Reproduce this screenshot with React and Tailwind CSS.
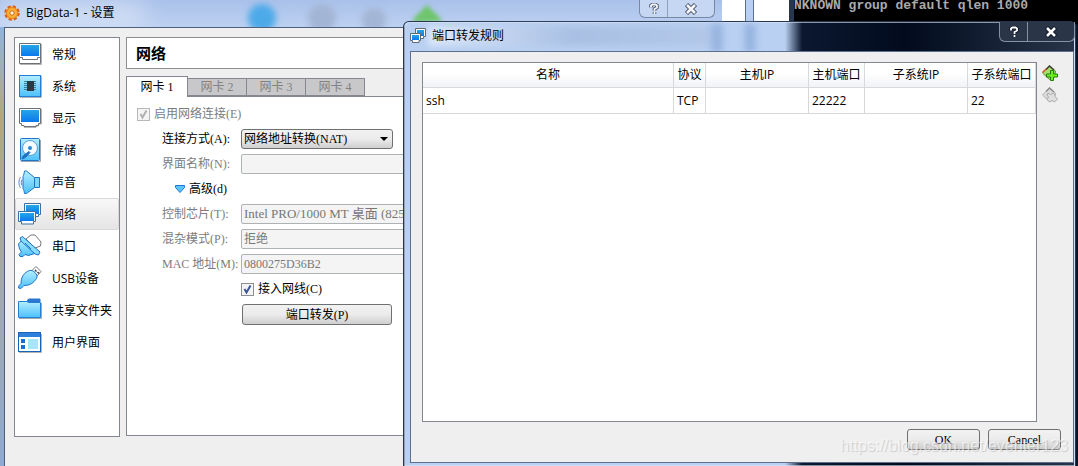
import React, { useState } from 'react';

const icons = {
  general: (
    <>
      <path d="M2 22.500h21.500V2" fill="none" stroke="#b5b5b5" />
      <path d="M1.500 1.500h21v20h-21z" fill="#fff" stroke="#6d7278" />
      <rect x="3" y="3" width="18" height="11" fill="url(#screenBlue)" />
      <path d="M1.500 15.500h3v2h15v-2h3" fill="none" stroke="#6d7278" />
    </>
  ),
  system: (
    <>
      <path d="M2 23.500h21.500V2" fill="none" stroke="#b5b5b5" />
      <rect x="1.500" y="1.500" width="21" height="21" fill="url(#lightBlue)" stroke="#1f7fd6" />
      <path d="M6 7.500h12M6 9.500h12M6 11.500h12M6 13.500h12M6 15.500h12" stroke="#3a7ea8" />
      <rect x="9" y="7" width="7" height="10" fill="#2f3742" />
    </>
  ),
  display: (
    <>
      <path d="M6 21.500h12v-1.500h2.500v-2h3V3" fill="none" stroke="#b5b5b5" />
      <path d="M1.500 2.500h21v15h-2v2h-2.500v1H6v-1H3.500v-2h-2z" fill="#fff" stroke="#6d7278" />
      <rect x="3" y="4" width="18" height="12" fill="url(#screenBlue)" />
    </>
  ),
  storage: (
    <>
      <path d="M3 23.500h19.500V2" fill="none" stroke="#9aa6b2" />
      <rect x="2.500" y="0.500" width="19" height="22" rx="1" fill="url(#lightBlue)" stroke="#1f74c8" />
      <circle cx="12" cy="10" r="7.500" fill="#f4fbff" stroke="#5a9fd4" />
      <circle cx="12" cy="10" r="2" fill="#2a86d8" />
      <path d="M4 20l1.500-2.500L11 13.500l1 1-4 4.500-3.500 2z" fill="#2470c0" stroke="#2470c0" />
    </>
  ),
  audio: (
    <>
      <path d="M16.500 7.500h5v10h-5z" fill="#7ad6ff" stroke="#1f74c8" />
      <path d="M6.500 1h2l8 6.500v10l-8 6h-2c-0.500-3-0.500-3-1.500-5v-12c1-2 1-2.500 1.500-5.500z" fill="url(#lightBlue)" stroke="#1f74c8" />
      <path d="M2.500 7c-2 3-2 8 0 11M4 9.500c-1 2-1 4 0 6" fill="none" stroke="#4a90cc" />
    </>
  ),
  network: (
    <>
      <path d="M6.500 1.500h16v11h-2v2h-14z" fill="#f4fbff" stroke="#3f6f9c" />
      <rect x="8" y="3" width="13" height="9" fill="url(#screenBlue)" />
      <path d="M0.500 9.500h17v10h-2v2.500h-12v-2.500h-3z" fill="#f4fbff" stroke="#3f6f9c" />
      <rect x="2" y="11" width="14" height="8" fill="url(#screenBlue)" />
    </>
  ),
  serial: (
    <>
      <path d="M8 5l5-4h4l6 7-0.500 4L17 14z" fill="#fff" stroke="#777" />
      <path d="M4 6L0.500 10l1 5 2 3L1 20.500l1 2h3l2-2 3.500 1L15 20l3-1z" fill="url(#lightBlue)" stroke="#1f74c8" strokeLinejoin="round" />
      <path d="M2 4l2.500-1.500L22 18l-1.500 3L17 20 3 7z" fill="#85dcff" stroke="#1f74c8" strokeLinejoin="round" />
      <path d="M7 9l6 6" stroke="#1f74c8" />
    </>
  ),
  usb: (
    <>
      <path d="M12.500 6l5.500-5.500 5 5L18 11z" fill="#fff" stroke="#777" />
      <path d="M17 4l1.500 1.500M19.500 6l1.500 1.500" stroke="#444" strokeWidth="1.500" />
      <path d="M11.500 4.500c2-0.500 4 0.500 5.500 2 2 2 2.500 4 1.500 6C15.500 17 12 19.500 6 19.500L3 22.500 0.500 22 1 19.500l2-2C3 11 6 6.500 11.500 4.500z" fill="url(#lightBlue)" stroke="#1f74c8" />
    </>
  ),
  folder: (
    <>
      <path d="M8.500 4l2-3H22v3z" fill="#2d77d0" stroke="#2d77d0" />
      <path d="M1 20.500h22.500V5" fill="none" stroke="#a3a9b0" />
      <path d="M0.500 3.500H9l1.500 1H22.500v15h-22z" fill="url(#lightBlue)" stroke="#1f80d4" />
    </>
  ),
  ui: (
    <>
      <path d="M1 22.500h22.500V4" fill="none" stroke="#b5b5b5" />
      <rect x="0.500" y="2.500" width="22" height="19" fill="#fff" stroke="#1c62b8" />
      <path d="M1 3h21v4H1z" fill="#2f80dc" />
      <path d="M3 9h4v4H3zM3 15h4v4H3z" fill="#1c6fd0" />
      <path d="M10 9h10v10H10z" fill="#a8e4fb" />
    </>
  ),
};

const sections = [
  { id: 'general', name: '常规' },
  { id: 'system', name: '系统' },
  { id: 'display', name: '显示' },
  { id: 'storage', name: '存储' },
  { id: 'audio', name: '声音' },
  { id: 'network', name: '网络' },
  { id: 'serial', name: '串口' },
  { id: 'usb', name: 'USB设备' },
  { id: 'folder', name: '共享文件夹' },
  { id: 'ui', name: '用户界面' },
];

const columns = [
  { name: '名称', width: '' },
  { name: '协议', width: 'w-8' },
  { name: '主机IP', width: 'w-[103px]' },
  { name: '主机端口', width: 'w-[56px]' },
  { name: '子系统IP', width: 'w-[103px]' },
  { name: '子系统端口', width: 'w-[68px]' },
];

const rules = [['ssh', 'TCP', '', '22222', '', '22']];

const fieldStyle = 'h-5 min-w-0 flex-1 appearance-none rounded-xs border border-[#adb2b5] bg-[#f4f4f4] px-0.5 text-[#777]';
const buttonStyle = 'rounded-[3px] border border-[#707070] bg-linear-to-b from-[#f2f2f2] via-[#ebebeb] via-50% to-[#cfcfcf] text-center text-black';

const Checkbox = ({ id, checked, disabled, onChange }) => (
  <span className="relative flex">
    <input
      id={id}
      type="checkbox"
      checked={checked}
      disabled={disabled}
      onChange={onChange}
      className="size-[13px] appearance-none border border-[#8e8f8f] bg-[#f4f4f4] disabled:border-[#b8b8b8]"
    />
    {checked && (
      <svg viewBox="0 0 13 13" className="pointer-events-none absolute inset-0 size-[13px]">
        <path d="M3.500 6l2 3.500 4-7" fill="none" strokeWidth="2" stroke={disabled ? '#b0b0b0' : '#3c5598'} />
      </svg>
    )}
  </span>
);

const Row = ({ id, label, disabled, children }) => (
  <div className="flex h-5 items-center pl-[35px]">
    <label htmlFor={id} className={`w-[79px] shrink-0 whitespace-nowrap ${disabled ? 'text-[#7c7c7c]' : ''}`}>{label}</label>
    {children}
  </div>
);

const CaptionButtons = ({ dark }) => (
  <div className={`flex h-full rounded-b-md border border-t-0 ${dark ? 'border-[#8591a5] bg-[#2a3548] text-white' : 'border-[#7787a5] bg-[#c5d7f2] text-[#f4f6fa]'}`}>
    <button aria-label="Help" className={`flex w-7 items-center justify-center border-r ${dark ? 'border-[#8591a5]' : 'border-[#8fa0bd]'}`}>
      <svg viewBox="0 0 12 12" className="size-3">
        <path d="M3 4.500V2.500L4.500 1.500h3L9 2.500v2L6.500 6v2M6.500 9v2" fill="none" stroke={dark ? '#111827' : '#4d566c'} strokeWidth="3.500" />
        <path d="M3 4.500V2.500L4.500 1.500h3L9 2.500v2L6.500 6v2M6.500 9v2" fill="none" stroke="currentColor" strokeWidth="1.800" />
      </svg>
    </button>
    <button aria-label="Close" className="flex w-[46px] items-center justify-center">
      <svg viewBox="0 0 12 12" className="size-3">
        <path d="M1.500 1.500l9 9M10.500 1.500l-9 9" stroke={dark ? '#111827' : '#4d566c'} strokeWidth="4.500" />
        <path d="M2 2l8 8M10 2l-8 8" stroke="currentColor" strokeWidth="2.500" />
      </svg>
    </button>
  </div>
);

const RuleIcon = ({ add }) => (
  <svg viewBox="0 0 16 16" className="size-4">
    <path d="M0.500 8L7.500 1l6 5-1 6-5 2.500z" fill={add ? '#a6dd6e' : '#dcdcdc'} stroke={add ? '#5b8f2c' : '#b0b0b0'} />
    <path d="M4 4.500L7.500 1l4.500 4" fill="none" stroke={add ? '#3c3a36' : '#8c8c8c'} strokeWidth="1.500" />
    {add ? (
      <>
        <path d="M0.500 7.500L4 4" stroke="#e2552c" strokeWidth="1.500" />
        <path d="M8.500 5.500h3v3.500h4v3h-4v3.500h-3v-3.500h-4v-3h4z" fill="#6cf01c" stroke="#23800f" />
      </>
    ) : (
      <path d="M6 6l2.500 1.500L11 6l2 2v1.500l2.500 2.500-3 3-2.500-1.500L7.500 15l-2.500-2.500L6.500 10 5 8z" fill="#dedede" stroke="#aaa" />
    )}
  </svg>
);

const SettingsWindow = () => {
  const [section, setSection] = useState('network');
  const [cable, setCable] = useState(true);

  return (
    <div className="absolute inset-y-0 left-0 flex w-[722px] flex-col bg-[#b9cdef]">
      <div className="relative flex h-[27px] items-start overflow-hidden bg-linear-to-b from-[#a9c1ea] to-[#bdd1f1] pl-1">
        {/* toolbar of the window behind, seen through the glass */}
        <div className="absolute top-1 left-[248px] size-7 rounded-full bg-[#4daae8] blur-[3px]"></div>
        <div className="absolute top-1 left-[308px] size-7 rounded-full bg-[#a3b5d4] blur-[3px]"></div>
        <div className="absolute top-2 left-[362px] size-6 rounded-full bg-[#a3b5d4] blur-[3px]"></div>
        <svg viewBox="0 0 36 24" className="absolute top-1 left-[408px] h-6 w-9 blur-[2px]">
          <path d="M19 1l14 14v3H5v-3z" fill="#6fc56c" />
        </svg>
        <div className="absolute top-0 left-0 h-7 w-36 bg-white/40 blur-md"></div>
        <h1 className="relative flex h-[26px] items-center gap-1.5">
          <svg viewBox="0 0 16 16" className="size-4">
            <circle cx="8" cy="8" r="6.500" fill="#fbb034" stroke="#d9601a" strokeWidth="2.500" strokeDasharray="3.100 2" />
            <circle cx="8" cy="8" r="5.500" fill="#fbb034" stroke="#e88420" />
            <circle cx="8" cy="8" r="2.200" fill="#fff3d8" stroke="#c9651c" />
          </svg>
          BigData-1 - 设置
        </h1>
        <div className="mr-[7px] ml-auto h-[18px]">
          <CaptionButtons />
        </div>
      </div>

      <div className="flex flex-1 bg-linear-to-b from-[#8fb4dc] via-[#b5a77c] via-20% to-[#8fa9d2] pr-[7px] pl-1">
        <div className="flex flex-1 gap-1.5 border-t border-l border-[#4d5f7c] bg-[#efefef] pt-[9px] pr-2 pb-[29px] pl-[9px]">
          <nav className="w-[106px] shrink-0 border border-[#828790] bg-white">
            {sections.map(item => (
              <button
                key={item.id}
                onClick={() => setSection(item.id)}
                className={`flex h-8 w-full items-center gap-2.5 rounded-xs border pl-0.5 ${section === item.id ? 'border-[#d9d9d9] bg-linear-to-b from-[#f8f8f8] to-[#e5e5e5]' : 'border-transparent'}`}
              >
                <svg viewBox="0 0 24 24" className="size-6 shrink-0">{icons[item.id]}</svg>
                <span className="pt-0.5 whitespace-nowrap">{item.name}</span>
              </button>
            ))}
          </nav>

          <main className="flex min-w-0 flex-1 flex-col">
            <h2 className="flex h-8 items-center border border-[#8e8f8f] bg-white pl-[9px] text-[15px] font-bold">网络</h2>
            <div className="z-10 mt-[7px] flex items-end font-['Liberation_Serif','Noto_Sans_CJK_SC',serif]">
              <button className="-mb-px h-[21px] w-[62px] border border-b-0 border-[#828790] bg-white">网卡 1</button>
              {[2, 3, 4].map(n => (
                <button key={n} className="-ml-px h-[18px] w-[60px] border border-[#85888e] bg-[#c8c8ca] text-[#828282]">网卡 {n}</button>
              ))}
            </div>
            <form
              onSubmit={e => e.preventDefault()}
              className="mb-px flex flex-1 flex-col gap-[5px] border border-[#828790] bg-white pt-[7px] pr-2 font-['Liberation_Serif','Noto_Sans_CJK_SC',serif]"
            >
              <div className="flex h-5 items-center gap-1 pl-2.5">
                <Checkbox id="enable" checked disabled />
                <label htmlFor="enable" className="text-[#7c7c7c]">启用网络连接(E)</label>
              </div>
              <Row id="attached" label="连接方式(A):">
                <span className="relative flex w-[152px]">
                  <select id="attached" className={`h-5 w-full appearance-none pl-0.5 text-left! ${buttonStyle}`}>
                    <option>网络地址转换(NAT)</option>
                  </select>
                  <svg viewBox="0 0 8 4" className="pointer-events-none absolute top-2 right-[5px] h-1 w-2"><path d="M0 0h8L4 4z" /></svg>
                </span>
              </Row>
              <Row id="iface" label="界面名称(N):" disabled>
                <input id="iface" disabled className={fieldStyle} />
              </Row>
              <div className="flex h-5 items-center pl-12">
                <button type="button" className="flex items-center gap-1">
                  <svg viewBox="0 0 10 8" className="h-2 w-2.5"><path d="M0.500 0.500h9v2L5 7.500 0.500 2.500z" fill="#5cc6fa" stroke="#1c76d2" /></svg>
                  高级(d)
                </button>
              </div>
              <Row id="adapter" label="控制芯片(T):" disabled>
                <select id="adapter" disabled className={`text-[13px] ${fieldStyle}`}>
                  <option>Intel PRO/1000 MT 桌面 (82540EM)</option>
                </select>
              </Row>
              <Row id="promiscuous" label="混杂模式(P):" disabled>
                <select id="promiscuous" disabled className={fieldStyle}>
                  <option>拒绝</option>
                </select>
              </Row>
              <Row id="mac" label="MAC 地址(M):" disabled>
                <input id="mac" disabled defaultValue="0800275D36B2" className={fieldStyle} />
              </Row>
              <div className="flex h-5 items-center gap-1 pl-[114px]">
                <Checkbox id="cable" checked={cable} onChange={e => setCable(e.target.checked)} />
                <label htmlFor="cable">接入网线(C)</label>
              </div>
              <button type="button" className={`ml-[115px] h-[21px] w-[150px] shrink-0 ${buttonStyle}`}>端口转发(P)</button>
            </form>
          </main>
        </div>
      </div>
    </div>
  );
};

const PortForwarding = () => (
  <section className="absolute top-[21px] right-[2px] bottom-0 left-[403px] z-20 flex flex-col rounded-t-md border border-b-0 border-[#27364d] bg-[#b9d0f2]">
    <div className="absolute inset-0 rounded-t-md border border-[#dce8f8]/60 bg-[linear-gradient(to_right,#b9d0f2_0,#b9d0f2_380px,#0b1830_397px,#020b1e_500px,#273449_100%)]"></div>
    <div className="absolute top-1 left-6 h-5 w-[290px] bg-linear-to-r from-white/50 via-[#a9c0e4] to-[#b3c8e9] blur-[3px]"></div>
    <div className="absolute top-0.5 left-[307px] h-7 w-3 bg-[#98b5e1] blur-[3px]"></div>
    <div className="absolute top-0.5 left-[340px] h-7 w-3 bg-[#98b5e1] blur-[3px]"></div>
    <header className="relative flex h-[29px] items-start pl-1.5">
      <h2 className="flex h-[27px] items-center gap-1.5">
        <svg viewBox="0 0 16 16" className="size-4">
          <path d="M5.500 0.500h10v8h-2v2h-8z" fill="#fff" stroke="#626a75" />
          <rect x="7" y="2" width="7" height="6" fill="url(#screenBlue)" />
          <path d="M0.500 5.500h10v7h-1.500v2H2.500v-2h-2z" fill="#fff" stroke="#626a75" />
          <rect x="2" y="7" width="7" height="5" fill="url(#screenBlue)" />
        </svg>
        端口转发规则
      </h2>
      <div className="ml-auto h-5">
        <CaptionButtons dark />
      </div>
    </header>
    <div className="relative mr-px mb-[3px] ml-[6px] flex flex-1 flex-col gap-[7px] border border-[#5d6f8c] bg-[#efefef] pt-[10px] pr-3 pb-3 pl-[11px]">
      <div className="flex flex-1 gap-[5px]">
        <div className="flex-1 border border-[#828790] bg-white">
          <table className="w-full table-fixed border-separate border-spacing-0">
            <thead>
              <tr className="h-[25px] bg-linear-to-b from-white from-40% to-[#f0f2f5]">
                {columns.map(col => (
                  <th key={col.name} className={`border-r border-b border-[#d8d9dc] p-0 font-normal whitespace-nowrap ${col.width}`}>{col.name}</th>
                ))}
              </tr>
            </thead>
            <tbody>
              {rules.map(rule => (
                <tr key={rule[0]} className="h-[26px]">
                  {rule.map((value, i) => (
                    <td key={i} className="border-r border-b border-[#d8d8d8] p-0 pl-[3px]">{value}</td>
                  ))}
                </tr>
              ))}
            </tbody>
          </table>
        </div>
        <div className="flex w-[19px] flex-col gap-1.5 pt-[3px]">
          <button aria-label="Add rule"><RuleIcon add /></button>
          <button aria-label="Remove rule" disabled><RuleIcon /></button>
        </div>
      </div>
      <footer className="flex justify-end gap-2 font-['Liberation_Serif','Noto_Sans_CJK_SC',serif]">
        <button className={`h-[21px] w-[73px] ${buttonStyle}`}>OK</button>
        <button className={`h-[21px] w-[73px] ${buttonStyle}`}>Cancel</button>
      </footer>
    </div>
  </section>
);

export default function App() {
  return (
    <div className="relative h-screen overflow-hidden bg-[#0b1526] font-['Open_Sans','Noto_Sans_CJK_SC',sans-serif] text-xs text-black">
      <svg className="absolute size-0" aria-hidden="true">
        <defs>
          <linearGradient id="screenBlue" x1="0" y1="0" x2="0" y2="1">
            <stop offset="0" stopColor="#25a5e8" />
            <stop offset="1" stopColor="#0879f0" />
          </linearGradient>
          <linearGradient id="lightBlue" x1="0" y1="0" x2="0" y2="1">
            <stop offset="0" stopColor="#b4eeff" />
            <stop offset="1" stopColor="#4cc0fa" />
          </linearGradient>
        </defs>
      </svg>

      {/* windows behind */}
      <div className="absolute top-0 left-[720px] h-6 w-[70px] border-r border-[#27364d] bg-[#b9d0f2]">
        <div className="flex h-full gap-[7px] pl-0.5">
          <div className="w-6 border-r border-[#5d6f8c] bg-white"></div>
          <div className="flex-1 border-l border-[#5d6f8c] bg-white"></div>
        </div>
      </div>
      <div className="absolute top-0 right-0 left-[790px] h-6 border-l-4 border-[#26364f] bg-black font-['Liberation_Mono',monospace] text-[13px] leading-3 font-bold whitespace-nowrap text-[#aaa]">
        NKNOWN group default qlen 1000
      </div>

      <SettingsWindow />
      <PortForwarding />

      <div className="pointer-events-none absolute right-2.5 bottom-2 z-30 font-['Liberation_Sans',sans-serif] text-base text-white/60 [text-shadow:1px_1px_1px_rgb(0_0_0/0.15)]">
        https://blog.csdn.net/eventer123
      </div>
    </div>
  );
}
